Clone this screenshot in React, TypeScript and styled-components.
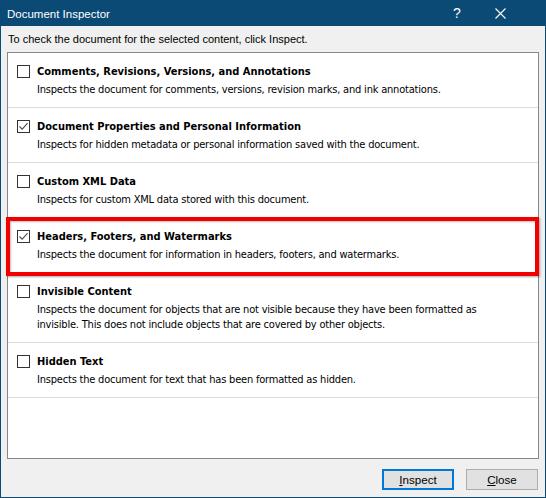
import React from "react";
import styled, { createGlobalStyle } from "styled-components";

const Global = createGlobalStyle`
  html, body { margin: 0; padding: 0; background: #f0f0f0; }
  body { width: 546px; height: 498px; overflow: hidden; }
  * { box-sizing: border-box; }
`;

const Window = styled.div`
  width: 546px;
  height: 498px;
  display: flex;
  flex-direction: column;
  background: #f0f0f0;
  border: 1px solid #0b4a75;
  border-top: none;
  font-family: "Liberation Sans", Arial, sans-serif;
  color: #000;
`;

const TitleBar = styled.div`
  height: 26px;
  flex: none;
  margin: 0 -1px;
  background: #0b4a75;
  color: #fff;
  display: flex;
  align-items: center;
  padding-left: 7px;
  font-size: 11.5px;
`;

const TitleText = styled.div`
  flex: 1;
  padding-top: 1px;
`;

const TitleButton = styled.div<{ $w: number }>`
  width: ${(p) => p.$w}px;
  height: 26px;
  display: flex;
  align-items: center;
  justify-content: center;
  font-size: 14px;
`;

const Body = styled.div`
  flex: 1;
  display: flex;
  flex-direction: column;
  padding: 0 6px;
`;

const Intro = styled.div`
  height: 26px;
  flex: none;
  display: flex;
  align-items: center;
  padding-left: 1px;
  font-size: 11px;
`;

const List = styled.div`
  height: 407px;
  flex: none;
  background: #fff;
  border: 1px solid #828790;
  font-family: Tahoma, "DejaVu Sans Condensed", "DejaVu Sans", sans-serif;
  font-size: 11px;
`;

const Row = styled.div`
  position: relative;
  display: grid;
  grid-template-columns: 13px 1fr;
  column-gap: 7px;
  padding: 12px 9px 10px 9px;
  border-bottom: 1px solid #dcdcdc;
`;

const Box = styled.div`
  width: 13px;
  height: 13px;
  border: 1px solid #333;
  background: #fff;
  display: flex;
  align-items: center;
  justify-content: center;
`;

const Texts = styled.div`
  display: flex;
  flex-direction: column;
  gap: 3px;
`;

const ItemTitle = styled.div`
  font-weight: bold;
  line-height: 14px;
  height: 14px;
`;

const ItemDesc = styled.div`
  line-height: 15px;
  letter-spacing: -0.2px;
`;

const Highlight = styled.div`
  position: absolute;
  left: -2px;
  right: -1px;
  top: -1px;
  bottom: -4px;
  border: 4px solid #f20000;
  box-shadow: 1px 1px 2px rgba(0, 0, 0, 0.35), inset 1px 1px 2px rgba(0, 0, 0, 0.25);
  pointer-events: none;
`;

const Footer = styled.div`
  flex: 1;
  display: flex;
  justify-content: flex-end;
  align-items: flex-start;
  gap: 12px;
  padding-top: 10px;
  padding-right: 1px;
`;

const Button = styled.div<{ $default?: boolean }>`
  width: 72px;
  height: 21px;
  background: #e1e1e1;
  border: ${(p) => (p.$default ? "2px solid #0078d7" : "1px solid #adadad")};
  display: flex;
  align-items: center;
  justify-content: center;
  font-size: 11.6px;
  u { text-decoration: underline; }
`;

type Item = { title: string; desc: React.ReactNode; checked: boolean; highlight?: boolean };

const items: Item[] = [
  {
    title: "Comments, Revisions, Versions, and Annotations",
    desc: "Inspects the document for comments, versions, revision marks, and ink annotations.",
    checked: false,
  },
  {
    title: "Document Properties and Personal Information",
    desc: "Inspects for hidden metadata or personal information saved with the document.",
    checked: true,
  },
  {
    title: "Custom XML Data",
    desc: "Inspects for custom XML data stored with this document.",
    checked: false,
  },
  {
    title: "Headers, Footers, and Watermarks",
    desc: "Inspects the document for information in headers, footers, and watermarks.",
    checked: true,
    highlight: true,
  },
  {
    title: "Invisible Content",
    desc: (
      <>
        Inspects the document for objects that are not visible because they have been formatted as
        <br />
        invisible. This does not include objects that are covered by other objects.
      </>
    ),
    checked: false,
  },
  {
    title: "Hidden Text",
    desc: "Inspects the document for text that has been formatted as hidden.",
    checked: false,
  },
];

const Check = () => (
  <svg width="11" height="11" viewBox="0 0 11 11">
    <path d="M1.5 5.5 L4.2 8.2 L9.6 2.2" fill="none" stroke="#4a4a4a" strokeWidth="1.1" />
  </svg>
);

export default function App() {
  return (
    <>
      <Global />
      <Window>
        <TitleBar>
          <TitleText>Document Inspector</TitleText>
          <TitleButton $w={40}>?</TitleButton>
          <TitleButton $w={46}>
            <svg width="11" height="11" viewBox="0 0 11 11">
              <path d="M0.5 0.5 L10.5 10.5 M10.5 0.5 L0.5 10.5" stroke="#fff" strokeWidth="1.1" />
            </svg>
          </TitleButton>
          <TitleButton $w={23} />
        </TitleBar>
        <Body>
          <Intro>To check the document for the selected content, click Inspect.</Intro>
          <List>
            {items.map((it) => (
              <Row key={it.title}>
                <Box>{it.checked && <Check />}</Box>
                <Texts>
                  <ItemTitle>{it.title}</ItemTitle>
                  <ItemDesc>{it.desc}</ItemDesc>
                </Texts>
                {it.highlight && <Highlight />}
              </Row>
            ))}
          </List>
          <Footer>
            <Button $default>
              <span>
                <u>I</u>nspect
              </span>
            </Button>
            <Button>
              <span>
                <u>C</u>lose
              </span>
            </Button>
          </Footer>
        </Body>
      </Window>
    </>
  );
}
